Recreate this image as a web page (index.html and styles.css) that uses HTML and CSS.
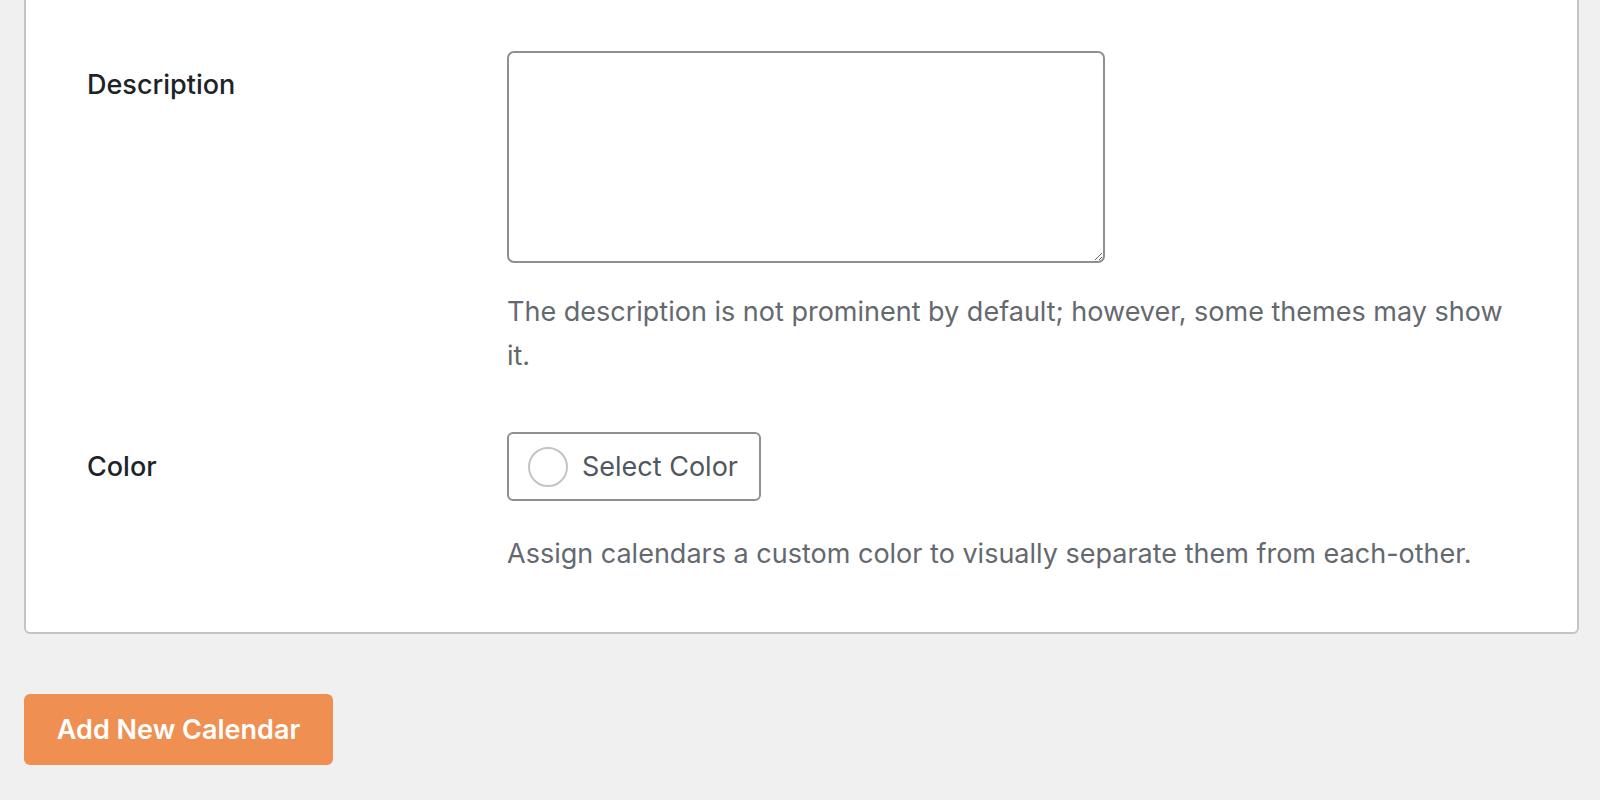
FILE: index.html
```html
<!DOCTYPE html>
<html lang="en">
<head>
    <meta charset="UTF-8">
    <meta name="viewport" content="width=device-width, initial-scale=1.0">
    <title>Add New Calendar</title>
    <link rel="stylesheet" href="styles.css">
</head>
<body>
    <form class="calendar-form">
        <div class="card">
            <div class="form-row">
                <label class="field-label" for="calendarDescription">Description</label>
                <div class="field">
                    <textarea id="calendarDescription" class="field-textarea"></textarea>
                    <p class="field-help">The description is not prominent by default; however, some themes may show it.</p>
                </div>
            </div>

            <div class="form-row form-row-color">
                <label class="field-label">Color</label>
                <div class="field">
                    <button type="button" class="color-btn">
                        <span class="color-swatch"></span>
                        <span>Select Color</span>
                    </button>
                    <p class="field-help">Assign calendars a custom color to visually separate them from each-other.</p>
                </div>
            </div>
        </div>

        <button type="submit" class="submit-btn">Add New Calendar</button>
    </form>
</body>
</html>
```

FILE: styles.css
```css
body {
    margin: 0;
    background-color: #f0f0f1;
    font-family: Inter, "Noto Sans", "Liberation Sans", sans-serif;
    color: #1d2327;
}

.calendar-form {
    padding-left: 24px;
    width: 1555px;
}

.card {
    background-color: #fff;
    border: 2px solid #c3c4c7;
    border-top: none;
    border-radius: 0 0 6px 6px;
    padding: 51px 0 56px 61px;
}

.form-row {
    display: grid;
    grid-template-columns: 420px 1fr;
}

.form-row-color {
    margin-top: 54px;
}

.field-label {
    font-size: 27px;
    font-weight: 500;
    line-height: 34px;
    padding-top: 17px;
}

.form-row-color .field-label {
    padding-top: 18px;
}

.field-textarea {
    display: block;
    box-sizing: border-box;
    width: 598px;
    height: 212px;
    margin: 0;
    border: 2px solid #8c8f94;
    border-radius: 7px;
    background-color: #fff;
}

.field-help {
    margin: 27px 0 0;
    font-size: 27px;
    line-height: 44px;
    color: #646970;
    max-width: 1020px;
}

.form-row-color .field-help {
    margin-top: 31px;
}

.color-btn {
    display: flex;
    align-items: center;
    gap: 14px;
    box-sizing: border-box;
    width: 254px;
    height: 69px;
    padding: 0 0 0 19px;
    border: 2px solid #8c8f94;
    border-radius: 6px;
    background-color: #fff;
    font-family: inherit;
    font-size: 27px;
    color: #50575e;
}

.color-swatch {
    box-sizing: border-box;
    width: 40px;
    height: 40px;
    border: 2px solid #c3c4c7;
    border-radius: 50%;
}

.submit-btn {
    display: block;
    box-sizing: border-box;
    margin-top: 60px;
    width: 309px;
    height: 71px;
    border: none;
    border-radius: 6px;
    background-color: #ef8f52;
    color: #fff;
    font-family: inherit;
    font-size: 27px;
    font-weight: 600;
    cursor: pointer;
}
```
